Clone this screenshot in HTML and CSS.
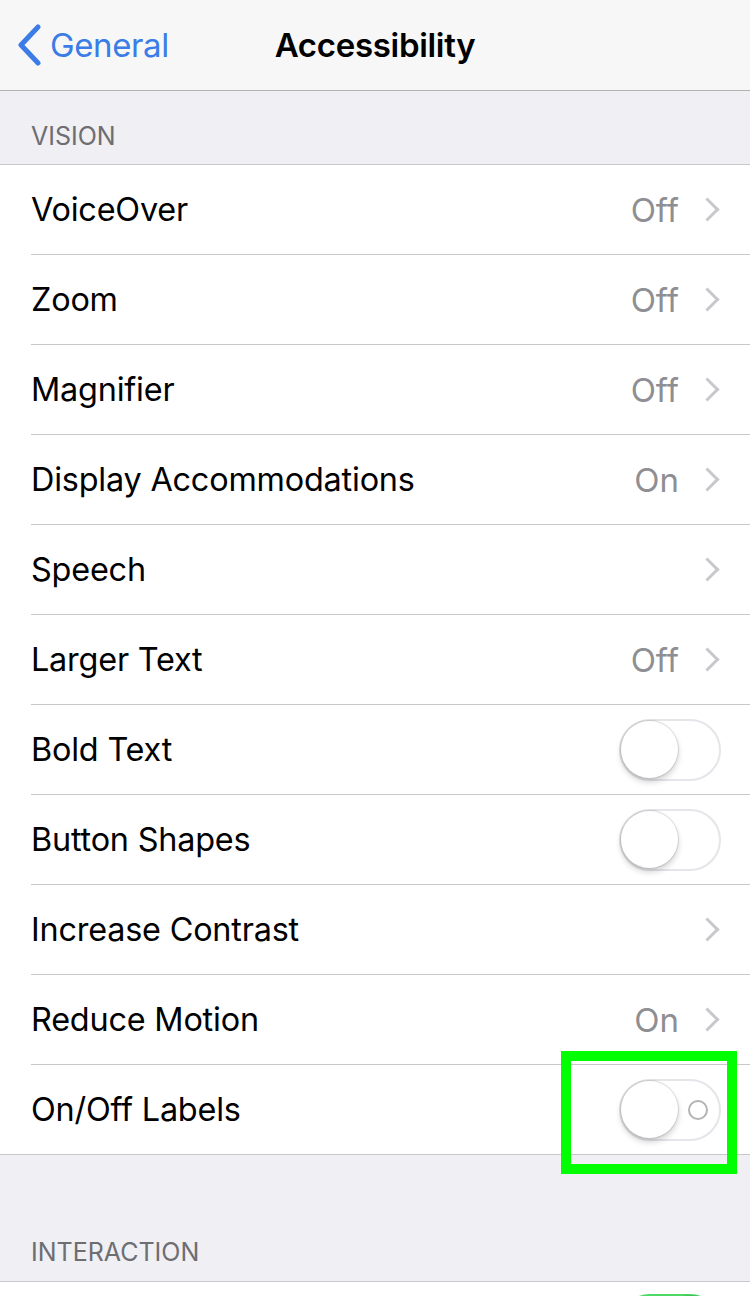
FILE: index.html
```html
<!DOCTYPE html>
<html lang="en">
<head>
    <meta charset="UTF-8">
    <meta name="viewport" content="width=device-width, initial-scale=1.0">
    <title>Accessibility</title>
    <link rel="stylesheet" href="styles.css">
</head>
<body>
    <div class="screen">
        <header class="navbar">
            <a class="back" href="#">
                <svg class="back-icon" width="26" height="42" viewBox="0 0 26 42">
                    <path d="M22 3 L5 21 L22 39" fill="none" stroke="#3b7ce6" stroke-width="5" stroke-linecap="round" stroke-linejoin="round"/>
                </svg>
                <span>General</span>
            </a>
            <h1 class="title">Accessibility</h1>
        </header>

        <div class="section-header">VISION</div>
        <ul class="group">
            <li class="row"><span class="label">VoiceOver</span><span class="value">Off</span><span class="chev"></span></li>
            <li class="row"><span class="label">Zoom</span><span class="value">Off</span><span class="chev"></span></li>
            <li class="row"><span class="label">Magnifier</span><span class="value">Off</span><span class="chev"></span></li>
            <li class="row"><span class="label">Display Accommodations</span><span class="value">On</span><span class="chev"></span></li>
            <li class="row"><span class="label">Speech</span><span class="chev"></span></li>
            <li class="row"><span class="label">Larger Text</span><span class="value">Off</span><span class="chev"></span></li>
            <li class="row"><span class="label">Bold Text</span><span class="switch"><span class="knob"></span></span></li>
            <li class="row"><span class="label">Button Shapes</span><span class="switch"><span class="knob"></span></span></li>
            <li class="row"><span class="label">Increase Contrast</span><span class="chev"></span></li>
            <li class="row"><span class="label">Reduce Motion</span><span class="value">On</span><span class="chev"></span></li>
            <li class="row highlighted"><span class="label">On/Off Labels</span><span class="switch labelled"><span class="knob"></span><span class="off-mark"></span></span></li>
        </ul>

        <div class="section-header tall">INTERACTION</div>
        <ul class="group">
            <li class="row peek"><span class="label"></span><span class="switch on"><span class="knob"></span></span></li>
        </ul>
    </div>
</body>
</html>
```

FILE: styles.css
```css
body {
    margin: 0;
    background: #efeff4;
    font-family: "Inter", "Liberation Sans", sans-serif;
    color: #000;
}
.screen {
    width: 750px;
    height: 1296px;
    overflow: hidden;
    position: relative;
}
.navbar {
    height: 90px;
    background: #f7f7f8;
    border-bottom: 1px solid #b2b2b2;
    display: flex;
    align-items: center;
    justify-content: center;
    position: relative;
}
.back {
    position: absolute;
    left: 16px;
    top: 24px;
    display: flex;
    align-items: center;
    gap: 8px;
    color: #3b7ce6;
    text-decoration: none;
    font-size: 33px;
    letter-spacing: -0.4px;
}
.title {
    margin: 0;
    font-size: 33px;
    font-weight: 600;
    letter-spacing: -0.3px;
}
.section-header {
    height: 74px;
    padding: 0 31px 0;
    display: flex;
    align-items: flex-end;
    box-sizing: border-box;
    padding-bottom: 13px;
    font-size: 25px;
    color: #6d6d72;
    border-bottom: 1px solid #c8c7cc;
}
.section-header.tall {
    height: 127px;
    padding-bottom: 14px;
}
.group {
    list-style: none;
    margin: 0;
    padding: 0 0 0 31px;
    background: #fff;
    border-bottom: 1px solid #c8c7cc;
}
.row {
    height: 89px;
    display: flex;
    align-items: center;
    padding-right: 30px;
    border-bottom: 1px solid #c8c7cc;
    position: relative;
}
.row:last-child {
    border-bottom: none;
}
.label {
    flex: 1;
    font-size: 32.4px;
    letter-spacing: -0.2px;
}
.value {
    font-size: 33px;
    color: #8e8e93;
    margin-right: 20px;
}
.chev {
    width: 14px;
    height: 14px;
    border-top: 3px solid #c7c7cc;
    border-right: 3px solid #c7c7cc;
    transform: rotate(45deg);
    margin-right: 4px;
}
.switch {
    width: 98px;
    height: 58px;
    border: 2px solid #e5e5ea;
    border-radius: 31px;
    background: #fff;
    position: relative;
    margin-right: -1px;
}
.knob {
    position: absolute;
    left: 0;
    top: 0;
    width: 57px;
    height: 57px;
    border-radius: 50%;
    background: #fff;
    box-shadow: 0 4px 6px rgba(0, 0, 0, 0.18), 0 0 1px 1px rgba(0, 0, 0, 0.12);
}
.off-mark {
    position: absolute;
    right: 11px;
    top: 19px;
    width: 16px;
    height: 16px;
    border: 2px solid #b3b3b3;
    border-radius: 50%;
}
.switch.on {
    background: #4cd964;
    border-color: #4cd964;
}
.switch.on .knob {
    left: auto;
    right: 0;
}
.peek {
    align-items: flex-start;
}
.peek .switch {
    margin-top: 12px;
}
.highlighted::after {
    content: "";
    position: absolute;
    left: 530px;
    top: -14px;
    width: 156px;
    height: 103px;
    border: 10px solid #00ff00;
}
```
